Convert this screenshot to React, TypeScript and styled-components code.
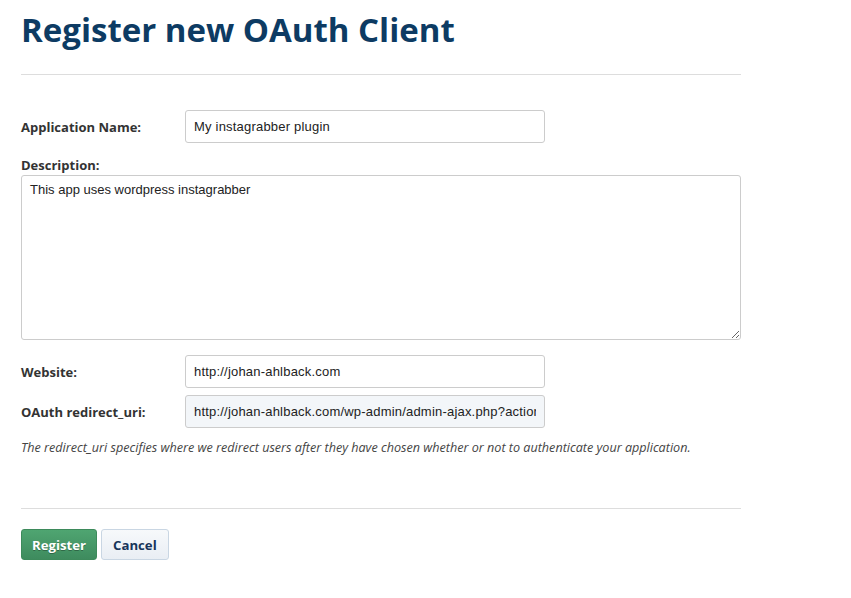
import React from "react";
import styled, { createGlobalStyle } from "styled-components";

const Global = createGlobalStyle`
  html, body { margin: 0; padding: 0; background: #fff; }
  body { font-family: "Open Sans", "Liberation Sans", sans-serif; color: #333; }
`;

const Page = styled.div`
  width: 720px;
  padding: 10px 0 0 21px;
`;

const Title = styled.h1`
  margin: 0;
  font-family: "Open Sans", sans-serif;
  font-weight: 700;
  font-size: 33px;
  line-height: 40px;
  letter-spacing: 0;
  color: #0d3b63;
`;

const Rule = styled.hr<{ $top: number; $bottom: number }>`
  border: 0;
  border-top: 1px solid #dddddd;
  margin: ${(p) => p.$top}px 0 ${(p) => p.$bottom}px;
`;

const Row = styled.div<{ $gap: number }>`
  display: flex;
  align-items: center;
  margin-bottom: ${(p) => p.$gap}px;
`;

const Label = styled.label<{ $w?: number }>`
  font-family: "Open Sans", sans-serif;
  font-weight: 700;
  font-size: 13px;
  line-height: 16px;
  color: #333;
  width: ${(p) => (p.$w ? `${p.$w}px` : "auto")};
  flex: none;
`;

const BlockLabel = styled(Label)`
  display: block;
  margin-bottom: 2px;
`;

const Input = styled.input<{ $muted?: boolean }>`
  box-sizing: border-box;
  width: 360px;
  height: 33px;
  padding: 0 8px;
  border: 1px solid #cccccc;
  border-radius: 3px;
  background: ${(p) => (p.$muted ? "#f3f6f9" : "#fff")};
  font-family: "Liberation Sans", Arial, sans-serif;
  font-size: 13px;
  letter-spacing: 0.2px;
  color: #222;
  outline: none;
`;

const TextArea = styled.textarea`
  box-sizing: border-box;
  display: block;
  width: 720px;
  height: 165px;
  padding: 6px 8px;
  border: 1px solid #cccccc;
  border-radius: 3px;
  font-family: "Liberation Sans", Arial, sans-serif;
  font-size: 13px;
  color: #222;
  resize: both;
  margin-bottom: 15px;
  outline: none;
`;

const Help = styled.p`
  margin: 11px 0 0;
  font-family: "Open Sans", sans-serif;
  font-style: italic;
  font-size: 12.6px;
  color: #444;
`;

const Buttons = styled.div`
  display: flex;
  gap: 4px;
`;

const Button = styled.button<{ $primary?: boolean }>`
  box-sizing: border-box;
  height: 31px;
  padding: 0 ${(p) => (p.$primary ? 10 : 11)}px;
  border-radius: 3px;
  font-family: "Open Sans", sans-serif;
  font-weight: 700;
  font-size: 13.2px;
  cursor: pointer;
  border: 1px solid ${(p) => (p.$primary ? "#3d8a5b" : "#c9d6e3")};
  background: ${(p) =>
    p.$primary
      ? "linear-gradient(#4fa571, #3e8b5e)"
      : "linear-gradient(#f7f9fb, #e9eef4)"};
  color: ${(p) => (p.$primary ? "#fff" : "#17355a")};
  text-shadow: ${(p) => (p.$primary ? "0 1px 0 rgba(0,0,0,0.3)" : "none")};
`;

export default function App() {
  return (
    <Page>
      <Global />
      <Title>Register new OAuth Client</Title>
      <Rule $top={24} $bottom={35} />
      <Row $gap={14}>
        <Label $w={164}>Application Name:</Label>
        <Input defaultValue="My instagrabber plugin" />
      </Row>
      <BlockLabel>Description:</BlockLabel>
      <TextArea defaultValue="This app uses wordpress instagrabber" />
      <Row $gap={7}>
        <Label $w={164}>Website:</Label>
        <Input defaultValue="http://johan-ahlback.com" />
      </Row>
      <Row $gap={0}>
        <Label $w={164}>OAuth redirect_uri:</Label>
        <Input $muted readOnly value="http://johan-ahlback.com/wp-admin/admin-ajax.php?action=instagrabber_oauth" />
      </Row>
      <Help>
        The redirect_uri specifies where we redirect users after they have chosen whether or not to authenticate your application.
      </Help>
      <Rule $top={52} $bottom={20} />
      <Buttons>
        <Button $primary>Register</Button>
        <Button>Cancel</Button>
      </Buttons>
    </Page>
  );
}
